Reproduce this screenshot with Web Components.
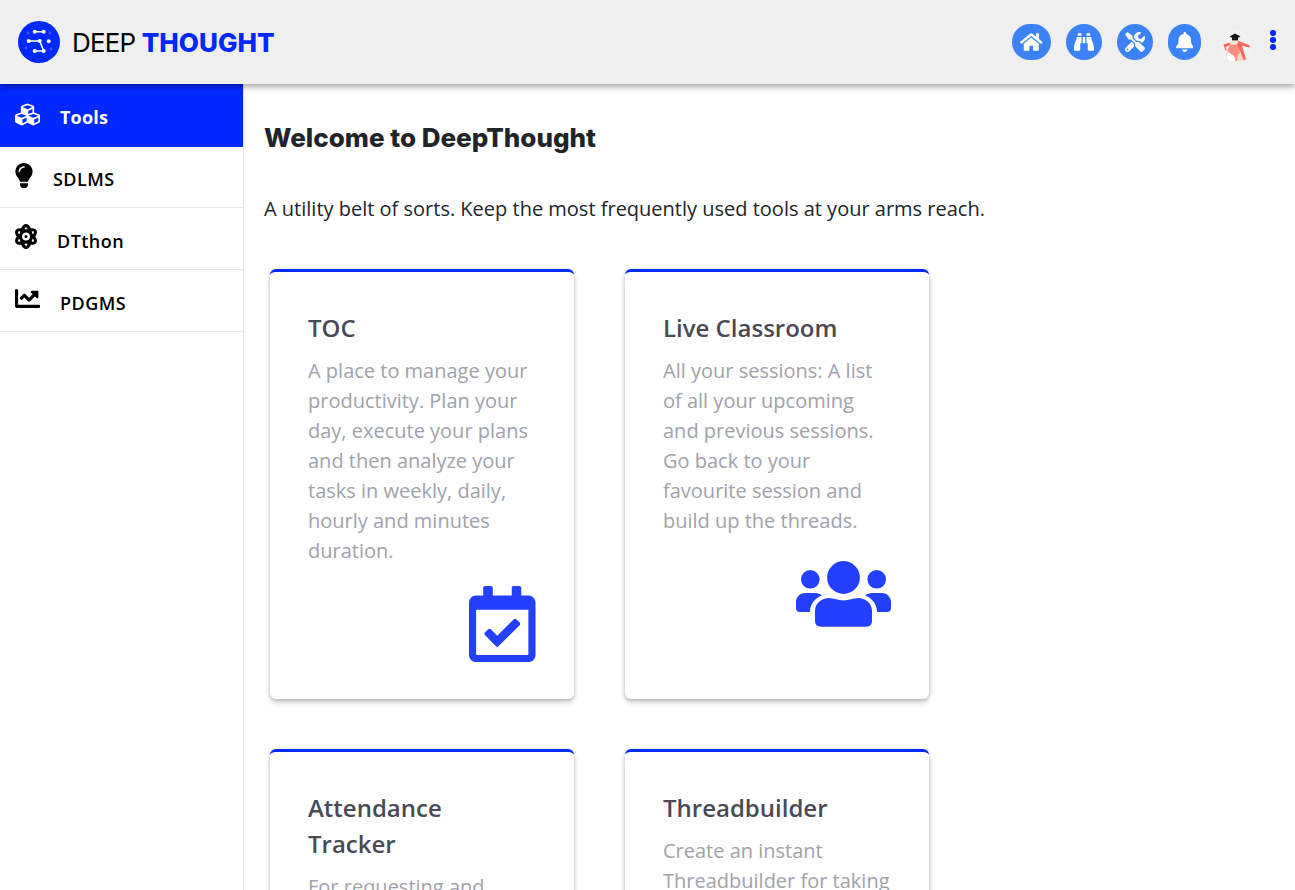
<!DOCTYPE html>
<html>
<head>
<meta charset="utf-8">
<title>DeepThought</title>
<style>
  html, body { margin: 0; height: 100%; overflow: hidden; background: #fff; }
  body { font-family: "Open Sans", sans-serif; }
</style>
</head>
<body>
<template id="icons">
  <svg xmlns="http://www.w3.org/2000/svg">
    <symbol id="home" viewBox="0 0 576 512"><path d="M280.37 148.26L96 300.11V464a16 16 0 0 0 16 16l112.06-.29a16 16 0 0 0 15.92-16V368a16 16 0 0 1 16-16h64a16 16 0 0 1 16 16v95.64a16 16 0 0 0 16 16.05L464 480a16 16 0 0 0 16-16V300L295.67 148.26a12.19 12.19 0 0 0-15.3 0zM571.6 251.47L488 182.56V44.05a12 12 0 0 0-12-12h-56a12 12 0 0 0-12 12v72.61L318.47 43a48 48 0 0 0-61 0L4.34 251.47a12 12 0 0 0-1.6 16.9l25.5 31A12 12 0 0 0 45.15 301l235.22-193.74a12.19 12.19 0 0 1 15.3 0L530.9 301a12 12 0 0 0 16.9-1.6l25.5-31a12 12 0 0 0-1.7-16.93z"/></symbol>
    <symbol id="binoculars" viewBox="0 0 512 512"><path d="M416 48c0-8.84-7.16-16-16-16h-64c-8.84 0-16 7.16-16 16v48h96V48zM63.91 159.99C61.4 253.84 3.46 274.22 0 404v44c0 17.67 14.33 32 32 32h96c17.67 0 32-14.33 32-32V288h32V128H95.84c-17.63 0-31.45 14.37-31.93 31.99zm384.18 0c-.48-17.62-14.3-31.99-31.93-31.99H320v160h32v160c0 17.67 14.33 32 32 32h96c17.67 0 32-14.33 32-32v-44c-3.46-129.78-61.4-150.16-63.91-244.01zM176 32h-64c-8.84 0-16 7.16-16 16v48h96V48c0-8.84-7.16-16-16-16zm48 256h64V128h-64v160z"/></symbol>
    <symbol id="tools" viewBox="0 0 512 512"><path d="M501.1 395.7L384 278.6c-23.1-23.1-57.6-27.6-85.4-13.9L192 158.1V96L64 0 0 64l96 128h62.1l106.6 106.6c-13.6 27.8-9.2 62.3 13.9 85.4l117.1 117.1c14.6 14.6 38.2 14.6 52.7 0l52.7-52.7c14.5-14.6 14.5-38.2 0-52.7zM331.7 225c28.3 0 54.9 11 74.9 31l19.4 19.4c15.8-6.9 30.8-16.5 43.8-29.5 37.1-37.1 49.7-89.3 37.9-136.7-2.2-9-13.5-12.1-20.1-5.5l-74.4 74.4-67.9-11.3L334 98.9l74.4-74.4c6.6-6.6 3.4-17.9-5.7-20.2-47.4-11.7-99.6.9-136.6 37.9-28.5 28.5-41.9 66.1-41.2 103.6l82.1 82.1c8.1-1.9 16.5-2.9 24.7-2.9zm-103.9 82l-56.7-56.7L18.7 402.8c-25 25-25 65.5 0 90.5s65.5 25 90.5 0l123.6-123.6c-7.6-19.9-9.9-41.6-5-62.7zM64 472c-13.2 0-24-10.8-24-24 0-13.3 10.7-24 24-24s24 10.7 24 24c0 13.2-10.7 24-24 24z"/></symbol>
    <symbol id="bell" viewBox="0 0 448 512"><path d="M224 512c35.32 0 63.97-28.65 63.97-64H160.03c0 35.35 28.65 64 63.97 64zm215.39-149.71c-19.32-20.76-55.47-51.99-55.47-154.29 0-77.7-54.48-139.9-127.94-155.16V32c0-17.67-14.32-32-31.98-32s-31.98 14.33-31.98 32v20.84C118.56 68.1 64.08 130.3 64.08 208c0 102.3-36.15 133.53-55.47 154.29-6 6.45-8.66 14.16-8.61 21.71.11 16.4 12.98 32 32.1 32h383.8c19.12 0 32-15.6 32.1-32 .05-7.55-2.61-15.27-8.61-21.71z"/></symbol>
    <symbol id="cubes" viewBox="0 0 512 512"><path d="M488.6 250.2L392 214V105.5c0-15-9.3-28.4-23.4-33.7l-100-37.5c-8.1-3.1-17.1-3.1-25.3 0l-100 37.5c-14.1 5.3-23.4 18.7-23.4 33.7V214l-96.6 36.2C9.3 255.5 0 268.9 0 283.9V394c0 13.6 7.7 26.1 19.9 32.2l100 50c10.1 5.1 22.1 5.1 32.2 0l103.9-52 103.9 52c10.1 5.1 22.1 5.1 32.2 0l100-50c12.2-6.1 19.9-18.6 19.9-32.2V283.9c0-15-9.3-28.4-23.4-33.7zM358 214.8l-85 31.9v-68.2l85-37v73.3zM154 104.1l102-38.2 102 38.2v.6l-102 41.4-102-41.4v-.6zm84 291.1l-85 42.5v-79.1l85-38.8v75.4zm0-112l-102 41.4-102-41.4v-.6l102-38.2 102 38.2v.6zm240 112l-85 42.5v-79.1l85-38.8v75.4zm0-112l-102 41.4-102-41.4v-.6l102-38.2 102 38.2v.6z"/></symbol>
    <symbol id="bulb" viewBox="0 0 352 512"><path d="M96.06 454.35c.01 6.29 1.87 12.45 5.36 17.69l17.09 25.69a31.99 31.99 0 0 0 26.64 14.28h61.71a31.99 31.99 0 0 0 26.64-14.28l17.09-25.69a31.989 31.989 0 0 0 5.36-17.69l.04-38.35H96.01l.05 38.35zM0 176c0 44.37 16.45 84.85 43.56 115.78 16.52 18.85 42.36 58.23 52.21 91.45.04.26.07.52.11.78h160.24c.04-.26.07-.51.11-.78 9.85-33.22 35.69-72.6 52.21-91.45C335.55 260.85 352 220.37 352 176 352 78.61 272.91-.3 175.45 0 73.44.31 0 82.97 0 176zm176-80c-44.11 0-80 35.89-80 80 0 8.84-7.16 16-16 16s-16-7.16-16-16c0-61.76 50.24-112 112-112 8.84 0 16 7.16 16 16s-7.16 16-16 16z"/></symbol>
    <symbol id="atom" viewBox="0 0 448 512"><path d="M223.99908,224a32,32,0,1,0,32.00782,32A32.06431,32.06431,0,0,0,223.99908,224Zm214.172-96c-10.877-19.5-40.50979-50.75-116.27544-41.875C300.39168,34.875,267.63386,0,223.99908,0s-76.39066,34.875-97.89653,86.125C50.3369,77.375,20.706,108.5,9.82907,128-6.54984,157.375-5.17484,201.125,34.958,256-5.17484,310.875-6.54984,354.625,9.82907,384c29.13087,52.375,101.64652,43.625,116.27348,41.875C147.60842,477.125,180.36429,512,223.99908,512s76.3926-34.875,97.89652-86.125c14.62891,1.75,87.14456,10.5,116.27544-41.875C454.55,354.625,453.175,310.875,413.04017,256,453.175,201.125,454.55,157.375,438.171,128ZM63.33886,352c-4-7.25-.125-24.75,15.00391-48.25,6.87695,6.5,14.12891,12.875,21.88087,19.125,1.625,13.75,4,27.125,6.75,40.125C82.34472,363.875,67.09081,358.625,63.33886,352Zm36.88478-162.875c-7.75196,6.25-15.00392,12.625-21.88087,19.125-15.12891-23.5-19.00392-41-15.00391-48.25,3.377-6.125,16.37891-11.5,37.88478-11.5,1.75,0,3.875.375,5.75.375C104.09864,162.25,101.84864,175.625,100.22364,189.125ZM223.99908,64c9.50195,0,22.25586,13.5,33.88282,37.25-11.252,3.75-22.50391,8-33.88282,12.875-11.377-4.875-22.62892-9.125-33.88283-12.875C201.74516,77.5,214.49712,64,223.99908,64Zm0,384c-9.502,0-22.25392-13.5-33.88283-37.25,11.25391-3.75,22.50587-8,33.88283-12.875C235.378,402.75,246.62994,407,257.8819,410.75,246.25494,434.5,233.501,448,223.99908,448Zm0-112a80,80,0,1,1,80-80A80.00023,80.00023,0,0,1,223.99908,336ZM384.6593,352c-3.625,6.625-19.00392,11.875-43.63479,11,2.75-13,5.125-26.375,6.75-40.125,7.75195-6.25,15.00391-12.625,21.87891-19.125C384.7843,327.25,388.6593,344.75,384.6593,352ZM369.65537,208.25c-6.875-6.5-14.127-12.875-21.87891-19.125-1.625-13.5-3.875-26.875-6.75-40.25,1.875,0,4-.375,5.75-.375,21.50391,0,34.50782,5.375,37.88283,11.5C388.6593,167.25,384.7843,184.75,369.65537,208.25Z"/></symbol>
    <symbol id="chart" viewBox="0 0 512 512"><path d="M496 384H64V80c0-8.84-7.16-16-16-16H16C7.16 64 0 71.16 0 80v336c0 17.67 14.33 32 32 32h464c8.84 0 16-7.16 16-16v-32c0-8.84-7.16-16-16-16zM464 96H345.94c-21.38 0-32.09 25.85-16.97 40.97l32.4 32.4L288 242.75l-73.37-73.37c-12.5-12.5-32.76-12.5-45.25 0l-68.69 68.69c-6.25 6.25-6.25 16.38 0 22.63l22.62 22.62c6.25 6.25 16.38 6.25 22.63 0L192 237.25l73.37 73.37c12.5 12.5 32.76 12.5 45.25 0l96-96 32.4 32.4c15.12 15.12 40.97 4.41 40.97-16.97V112c.01-8.84-7.15-16-15.99-16z"/></symbol>
    <symbol id="calendar" viewBox="0 0 448 512"><path d="M400 64h-48V12c0-6.6-5.4-12-12-12h-40c-6.6 0-12 5.4-12 12v52H160V12c0-6.6-5.4-12-12-12h-40c-6.6 0-12 5.4-12 12v52H48C21.5 64 0 85.5 0 112v352c0 26.5 21.5 48 48 48h352c26.5 0 48-21.5 48-48V112c0-26.5-21.5-48-48-48zm-6 400H54c-3.3 0-6-2.7-6-6V160h352v298c0 3.3-2.7 6-6 6zm-52.8-200.2L198.5 405.3c-4.7 4.7-12.3 4.6-17 0l-74.5-75.1c-4.7-4.7-4.6-12.3 0-17l22.7-22.5c4.7-4.7 12.3-4.6 17 0l43.5 43.9 111.5-110.6c4.7-4.7 12.3-4.6 17 0l22.5 22.7c4.7 4.7 4.7 12.3.1 17z"/></symbol>
    <symbol id="users" viewBox="0 0 95 76"><circle cx="47.5" cy="21.5" r="16.4"/><circle cx="14.3" cy="23.3" r="9.3"/><circle cx="80.7" cy="23.3" r="9.3"/><path d="M19 65V55C19 47 26 42 33 42C38 42 42 44.5 47.5 44.5C53 44.5 57 42 62 42C69 42 76 47 76 55V65Q76 70.7 70 70.7H25Q19 70.7 19 65Z"/><path d="M0 52V46C0 41 4 37 9 37H19C22 37 24 38 26 39.5C19 42 14 48 14 56H4Q0 56 0 52Z"/><path d="M95 52V46C95 41 91 37 86 37H76C73 37 71 38 69 39.5C76 42 81 48 81 56H91Q95 56 95 52Z"/></symbol>
  </svg>
</template>

<script>
const iconSprite = document.getElementById('icons').content

// every shadow root needs its own copy, <use> can't reach across shadow trees
function spriteIcon (name) {
  const symbol = iconSprite.querySelector('#' + name)
  return `<svg viewBox="${symbol.getAttribute('viewBox')}" fill="currentColor">${symbol.innerHTML}</svg>`
}

// attributes aren't there yet in the constructor when the parser makes the element,
// so the markup goes in on connect
class DtElement extends HTMLElement {
  constructor () {
    super()
    this.attachShadow({ mode: 'open' })
  }

  connectedCallback () {
    if (!this.shadowRoot.firstChild) {
      this.shadowRoot.innerHTML = this.markup()
    }
  }
}

class DtLogo extends DtElement {
  markup () {
    return `
      <style>
        :host { display: flex; align-items: center; gap: 13px; }
        svg { width: 42px; height: 42px; display: block; }
        .name { font: 400 26px/1 "Inter", sans-serif; color: #000; letter-spacing: -0.85px; white-space: nowrap; padding-top: 2px; margin-left: -1px; }
        b { font-weight: 800; color: #0028ff; letter-spacing: 0.05px; }
      </style>
      <svg viewBox="0 0 42 42">
        <circle cx="21" cy="21" r="21" fill="#0028ff"/>
        <g fill="#3b57ff">
          <circle cx="10" cy="12" r="1.4"/><circle cx="32" cy="12" r="1.4"/>
          <circle cx="8" cy="27" r="1.4"/><circle cx="33" cy="28" r="1.4"/>
        </g>
        <path d="M16.7 10.7H25.7M10.7 20H21.7L25.7 30H16.7" stroke="#fff" stroke-width="1.6" fill="none"/>
        <g fill="#fff">
          <circle cx="16.7" cy="10.7" r="2"/><circle cx="25.7" cy="10.7" r="2"/>
          <circle cx="10.7" cy="20" r="2"/><circle cx="21.7" cy="20" r="2"/><circle cx="30.7" cy="20.3" r="2"/>
          <circle cx="16.7" cy="30" r="2"/><circle cx="25.7" cy="30" r="2"/>
        </g>
      </svg>
      <div class="name">DEEP <b>THOUGHT</b></div>
    `
  }
}

class DtRoundIcon extends DtElement {
  markup () {
    return `
      <style>
        :host { display: block; padding: 8px; border-radius: 999px; background: #3b82f6; color: #fff; }
        svg { display: block; height: 20px; }
      </style>
      ${spriteIcon(this.getAttribute('icon'))}
    `
  }
}

class DtHeader extends DtElement {
  markup () {
    return `
      <style>
        :host {
          display: flex; align-items: center; height: 84px; box-sizing: border-box;
          padding: 0 18px; background: #efefef; position: relative; z-index: 2;
          box-shadow: 0 3px 6px rgba(0, 0, 0, .35);
        }
        .actions { margin-left: auto; display: flex; align-items: center; gap: 15px; }
        .avatar { display: block; width: 32px; height: 32px; margin: 8px 0 0 19px; }
        .more { display: flex; flex-direction: column; gap: 1.4px; margin: 0 1px 4px 18px; }
        .more i { width: 5.6px; height: 5.6px; border-radius: 50%; background: #0028ff; }
      </style>
      <dt-logo></dt-logo>
      <div class="actions">
        <dt-round-icon icon="home"></dt-round-icon>
        <dt-round-icon icon="binoculars"></dt-round-icon>
        <dt-round-icon icon="tools"></dt-round-icon>
        <dt-round-icon icon="bell"></dt-round-icon>
      </div>
      <svg class="avatar" viewBox="0 0 32 32">
        <circle cx="16" cy="16" r="16" fill="#f2f2f2"/>
        <path d="M10 15C7 20 5 26 8 31H19C21 26 20 18 17 13Z" fill="#fb8f7f"/>
        <path d="M8 21C6 25 6 29 9 31H15C16 28 14 26 13 25C11 24 9 23 8 21Z" fill="#fff"/>
        <path d="M17 31H24L22 23L18 24Z" fill="#fcd3c8"/>
        <path d="M16 10L30 15.5L29.2 17.6L22 15.4L26 29.5L23.8 30.2L17 14Z" fill="#f8695c"/>
        <path d="M3.5 14.5L10 12.6L10.6 14.2L5.5 17.5L7 20L5.5 20.6Z" fill="#f8695c"/>
        <circle cx="14.5" cy="11.5" r="3.6" fill="#fde3dc"/>
        <path d="M9.5 6.5L15 3.5L20.5 6.5L15 9.5Z" fill="#1b1b1b"/>
        <path d="M12 8H18V10.4H12Z" fill="#1b1b1b"/>
      </svg>
      <div class="more"><i></i><i></i><i></i></div>
    `
  }
}

class DtNavItem extends DtElement {
  markup () {
    const width = this.getAttribute('icon-width') || 25
    return `
      <style>
        :host {
          display: flex; align-items: center; box-sizing: border-box; height: 62px;
          padding: 4px 15px 0; gap: 20px; color: #000;
          border-bottom: 1px solid #e5e7eb;
          font: 600 18px/28px "Open Sans", sans-serif; letter-spacing: .45px;
          --icon-top: -4px;
        }
        :host([short]) { height: 61px; padding-top: 3px; --icon-top: -3px; }
        :host([active]) { height: 63px; padding-top: 2px; background: #0028ff; color: #fff; border-bottom: 0; font-weight: 700; letter-spacing: .2px; --icon-top: -2px; }
        svg { display: block; width: ${width}px; height: 25px; flex: none; position: relative; top: var(--icon-top); }
      </style>
      ${spriteIcon(this.getAttribute('icon'))}
      <slot></slot>
    `
  }
}

class DtSidebar extends DtElement {
  markup () {
    return `
      <style>
        :host { display: block; flex: none; width: 244px; box-sizing: border-box; border-right: 1px solid #e5e7eb; background: #fff; }
      </style>
      <slot></slot>
    `
  }
}

class DtToolCard extends DtElement {
  markup () {
    return `
      <style>
        :host {
          display: block; box-sizing: border-box; height: 430px; padding: 38px 38px 0;
          background: #fff; border-top: 3px solid #0028ff; border-radius: 6px;
          box-shadow: 0 1px 3px 1px rgba(0, 0, 0, .12), 0 4px 6px -1px rgba(0, 0, 0, .2);
        }
        h3 { margin: 0 0 10px; padding-right: 10px; font: 600 24px/36px "Open Sans", sans-serif; color: #4a4a56; }
        p { margin: 0; font: 400 20px/30px "Open Sans", sans-serif; color: #a1a1aa; }
        .icon { display: flex; justify-content: flex-end; margin-top: 20px; color: #2340ff; }
        .icon svg { display: block; height: 76px; }
      </style>
      <h3>${this.getAttribute('heading')}</h3>
      <p><slot></slot></p>
      <div class="icon">${this.hasAttribute('icon') ? spriteIcon(this.getAttribute('icon')) : ''}</div>
    `
  }
}

class DtMain extends DtElement {
  markup () {
    return `
      <style>
        :host { display: block; flex: 1; min-width: 0; padding: 36px 20px 0 20px; overflow: hidden; }
        h1 { margin: 0; font: 800 26px/36px "Inter", sans-serif; color: #212529; }
        .intro { margin: 38px 0 0; font: 400 20px/30px "Open Sans", sans-serif; color: #212529; }
        .grid { display: grid; grid-template-columns: 303.5px 303.5px; gap: 50px 51.5px; margin: 45px 0 0 6px; }
      </style>
      <h1>Welcome to DeepThought</h1>
      <p class="intro">A utility belt of sorts. Keep the most frequently used tools at your arms reach.</p>
      <div class="grid"><slot></slot></div>
    `
  }
}

class DtApp extends DtElement {
  markup () {
    return `
      <style>
        :host { display: flex; flex-direction: column; height: 100vh; overflow: hidden; }
        .body { flex: 1; display: flex; min-height: 0; }
      </style>
      <dt-header></dt-header>
      <div class="body">
        <slot name="nav"></slot>
        <slot></slot>
      </div>
    `
  }
}

customElements.define('dt-logo', DtLogo)
customElements.define('dt-round-icon', DtRoundIcon)
customElements.define('dt-header', DtHeader)
customElements.define('dt-nav-item', DtNavItem)
customElements.define('dt-sidebar', DtSidebar)
customElements.define('dt-tool-card', DtToolCard)
customElements.define('dt-main', DtMain)
customElements.define('dt-app', DtApp)
</script>

<dt-app>
  <dt-sidebar slot="nav">
    <dt-nav-item icon="cubes" active>Tools</dt-nav-item>
    <dt-nav-item icon="bulb" icon-width="18" short>SDLMS</dt-nav-item>
    <dt-nav-item icon="atom" icon-width="22">DTthon</dt-nav-item>
    <dt-nav-item icon="chart">PDGMS</dt-nav-item>
  </dt-sidebar>
  <dt-main>
    <dt-tool-card heading="TOC" icon="calendar">A place to manage your productivity. Plan your day, execute your plans and then analyze your tasks in weekly, daily, hourly and minutes duration.</dt-tool-card>
    <dt-tool-card heading="Live Classroom" icon="users">All your sessions: A list of all your upcoming and previous sessions. Go back to your favourite session and build up the threads.</dt-tool-card>
    <dt-tool-card heading="Attendance Tracker">For requesting and tracking attendance in your sessions.</dt-tool-card>
    <dt-tool-card heading="Threadbuilder">Create an instant Threadbuilder for taking notes in your sessions.</dt-tool-card>
  </dt-main>
</dt-app>
</body>
</html>
